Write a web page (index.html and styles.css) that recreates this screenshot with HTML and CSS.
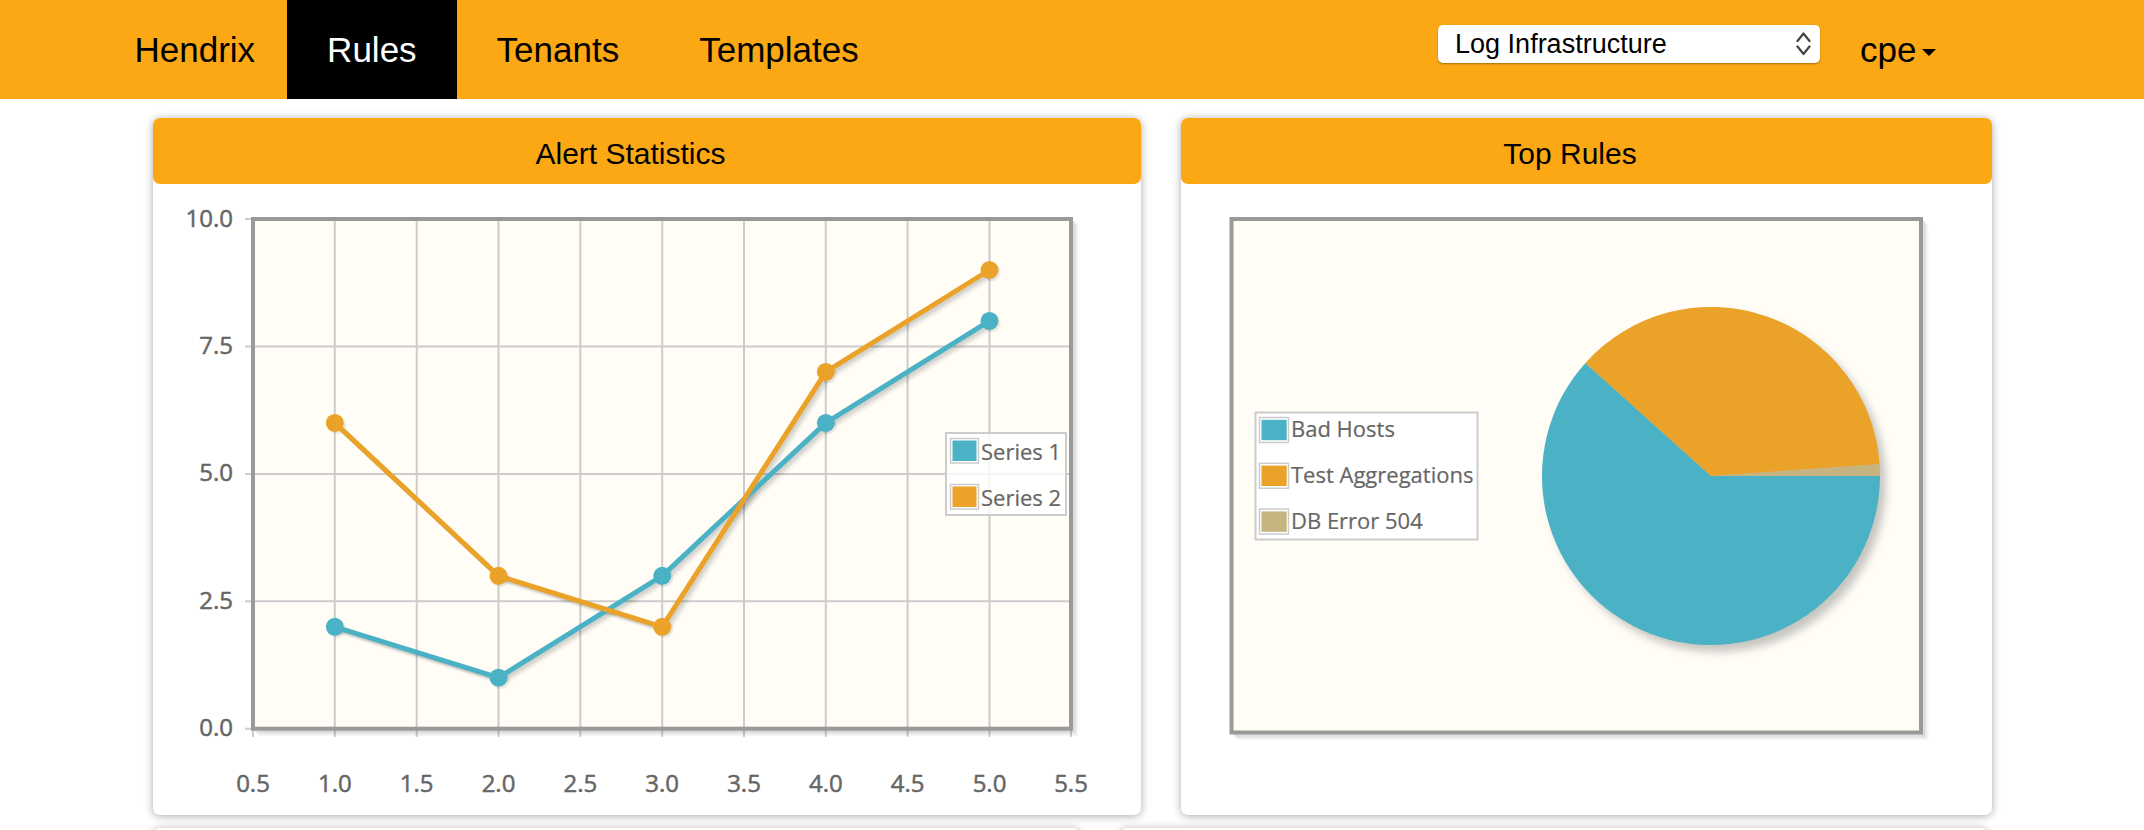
FILE: index.html
```html
<!DOCTYPE html>
<html lang="en">
<head>
<meta charset="utf-8">
<title>Hendrix - Rules</title>
<link rel="stylesheet" href="styles.css">
</head>
<body>
<nav class="navbar">
  <div class="nav-inner">
    <a class="brand" href="#">Hendrix</a>
    <ul class="nav-links">
      <li class="active"><a href="#">Rules</a></li>
      <li><a href="#">Tenants</a></li>
      <li><a href="#">Templates</a></li>
    </ul>
    <div class="spacer"></div>
    <div class="select">
      <span class="select-text">Log Infrastructure</span>
      <svg class="chevrons" width="16" height="24" viewBox="0 0 16 24">
        <polyline points="1.5,9 7.5,1.5 13.5,9" fill="none" stroke="#444" stroke-width="2.2" stroke-linecap="round" stroke-linejoin="round"/>
        <polyline points="1.5,14.5 7.5,22 13.5,14.5" fill="none" stroke="#444" stroke-width="2.2" stroke-linecap="round" stroke-linejoin="round"/>
      </svg>
    </div>
    <a class="user" href="#">cpe<span class="caret"></span></a>
  </div>
</nav>

<main class="container">
  <div class="row">
    <section class="card card-left">
      <div class="card-header">Alert Statistics</div>
      <div class="card-body">
        <svg class="chart" width="988" height="631" viewBox="153 184 988 631">
          <defs>
            <clipPath id="plotclip"><rect x="255" y="221" width="814" height="506"/></clipPath>
          </defs>
          <!-- plot background -->
          <rect x="253" y="219" width="818" height="509.7" fill="#fffdf6"/>
          <!-- grid -->
          <g stroke="#cccccc" stroke-width="2">
            <line x1="334.8" y1="219" x2="334.8" y2="737"/>
            <line x1="416.7" y1="219" x2="416.7" y2="737"/>
            <line x1="498.5" y1="219" x2="498.5" y2="737"/>
            <line x1="580.3" y1="219" x2="580.3" y2="737"/>
            <line x1="662.2" y1="219" x2="662.2" y2="737"/>
            <line x1="744.0" y1="219" x2="744.0" y2="737"/>
            <line x1="825.8" y1="219" x2="825.8" y2="737"/>
            <line x1="907.6" y1="219" x2="907.6" y2="737"/>
            <line x1="989.5" y1="219" x2="989.5" y2="737"/>
            <line x1="253" y1="737" x2="253" y2="728"/>
            <line x1="1071" y1="737" x2="1071" y2="728"/>
            <line x1="245" y1="346.4" x2="1071" y2="346.4"/>
            <line x1="245" y1="473.9" x2="1071" y2="473.9"/>
            <line x1="245" y1="601.3" x2="1071" y2="601.3"/>
            <line x1="245" y1="219" x2="253" y2="219"/>
            <line x1="245" y1="728.7" x2="253" y2="728.7"/>
          </g>
          <!-- border shadow -->
          <g fill="none" stroke="#000" stroke-width="4">
            <polyline points="255,730.5 1072.8,730.5 1072.8,221" stroke-opacity="0.08"/>
            <polyline points="256.8,732.3 1074.6,732.3 1074.6,222.8" stroke-opacity="0.06"/>
            <polyline points="258.6,734.1 1076.4,734.1 1076.4,224.6" stroke-opacity="0.04"/>
          </g>
          <!-- border -->
          <rect x="253" y="219" width="818" height="509.7" fill="none" stroke="#999999" stroke-width="4"/>

          <!-- series shadows -->
          <g clip-path="url(#plotclip)" fill="none" stroke="#000" stroke-width="5" stroke-linejoin="round">
            <g transform="translate(1.8,1.8)" stroke-opacity="0.1">
              <polyline points="334.8,626.8 498.5,677.7 662.2,575.8 825.8,422.9 989.5,320.9"/>
              <polyline points="334.8,422.9 498.5,575.8 662.2,626.8 825.8,371.9 989.5,270.0"/>
            </g>
            <g transform="translate(3.5,3.5)" stroke-opacity="0.07">
              <polyline points="334.8,626.8 498.5,677.7 662.2,575.8 825.8,422.9 989.5,320.9"/>
              <polyline points="334.8,422.9 498.5,575.8 662.2,626.8 825.8,371.9 989.5,270.0"/>
            </g>
            <g transform="translate(5.3,5.3)" stroke-opacity="0.04">
              <polyline points="334.8,626.8 498.5,677.7 662.2,575.8 825.8,422.9 989.5,320.9"/>
              <polyline points="334.8,422.9 498.5,575.8 662.2,626.8 825.8,371.9 989.5,270.0"/>
            </g>
          </g>
          <g fill="#000" fill-opacity="0.08">
            <circle cx="337" cy="629" r="9"/><circle cx="500.7" cy="679.9" r="9"/><circle cx="664.4" cy="578" r="9"/><circle cx="828" cy="425.1" r="9"/><circle cx="991.7" cy="323.1" r="9"/>
            <circle cx="337" cy="425.1" r="9"/><circle cx="500.7" cy="578" r="9"/><circle cx="664.4" cy="629" r="9"/><circle cx="828" cy="374.1" r="9"/><circle cx="991.7" cy="272.2" r="9"/>
          </g>
          <!-- series 1 -->
          <polyline points="334.8,626.8 498.5,677.7 662.2,575.8 825.8,422.9 989.5,320.9" fill="none" stroke="#4bb2c5" stroke-width="5" stroke-linejoin="round"/>
          <g fill="#4bb2c5">
            <circle cx="334.8" cy="626.8" r="9"/><circle cx="498.5" cy="677.7" r="9"/><circle cx="662.2" cy="575.8" r="9"/><circle cx="825.8" cy="422.9" r="9"/><circle cx="989.5" cy="320.9" r="9"/>
          </g>
          <!-- series 2 -->
          <polyline points="334.8,422.9 498.5,575.8 662.2,626.8 825.8,371.9 989.5,270.0" fill="none" stroke="#eaa228" stroke-width="5" stroke-linejoin="round"/>
          <g fill="#eaa228">
            <circle cx="334.8" cy="422.9" r="9"/><circle cx="498.5" cy="575.8" r="9"/><circle cx="662.2" cy="626.8" r="9"/><circle cx="825.8" cy="371.9" r="9"/><circle cx="989.5" cy="270.0" r="9"/>
          </g>

          <!-- axis labels -->
          <g class="axis-text" text-anchor="end">
            <text x="233" y="226.5">10.0</text>
            <text x="233" y="353.9">7.5</text>
            <text x="233" y="481.4">5.0</text>
            <text x="233" y="608.8">2.5</text>
            <text x="233" y="736.2">0.0</text>
          </g>
          <g class="axis-text" text-anchor="middle">
            <text x="253" y="792">0.5</text>
            <text x="334.8" y="792">1.0</text>
            <text x="416.7" y="792">1.5</text>
            <text x="498.5" y="792">2.0</text>
            <text x="580.3" y="792">2.5</text>
            <text x="662.2" y="792">3.0</text>
            <text x="744.0" y="792">3.5</text>
            <text x="825.8" y="792">4.0</text>
            <text x="907.6" y="792">4.5</text>
            <text x="989.5" y="792">5.0</text>
            <text x="1071" y="792">5.5</text>
          </g>

          <!-- legend -->
          <rect x="946" y="433" width="120" height="82" fill="#ffffff" fill-opacity="0.8" stroke="#cccccc" stroke-width="2"/>
          <rect x="950.5" y="438.5" width="28" height="24.5" fill="#fff" stroke="#cccccc" stroke-width="1.5"/>
          <rect x="952.5" y="440.5" width="24" height="20.5" fill="#4bb2c5"/>
          <rect x="950.5" y="484.5" width="28" height="24.5" fill="#fff" stroke="#cccccc" stroke-width="1.5"/>
          <rect x="952.5" y="486.5" width="24" height="20.5" fill="#eaa228"/>
          <g class="legend-text">
            <text x="981" y="459.5">Series 1</text>
            <text x="981" y="505.5">Series 2</text>
          </g>
        </svg>
      </div>
    </section>

    <section class="card card-right">
      <div class="card-header">Top Rules</div>
      <div class="card-body">
        <svg class="chart" width="811" height="631" viewBox="1181 184 811 631">
          <defs>
            <filter id="pieshadow" x="-20%" y="-20%" width="140%" height="140%">
              <feGaussianBlur stdDeviation="4"/>
            </filter>
          </defs>
          <rect x="1231.5" y="219" width="689.5" height="513.5" fill="#fffdf6"/>
          <g fill="none" stroke="#000" stroke-width="4">
            <polyline points="1233.3,734.3 1922.8,734.3 1922.8,220.8" stroke-opacity="0.08"/>
            <polyline points="1235.1,736.1 1924.6,736.1 1924.6,222.6" stroke-opacity="0.06"/>
            <polyline points="1236.9,737.9 1926.4,737.9 1926.4,224.4" stroke-opacity="0.04"/>
          </g>
          <rect x="1231.5" y="219" width="689.5" height="513.5" fill="none" stroke="#999999" stroke-width="4"/>

          <!-- pie -->
          <circle cx="1717" cy="483" r="169" fill="#000" fill-opacity="0.22" filter="url(#pieshadow)"/>
          <path d="M1711,476 L1880,476 A169,169 0 1 1 1585.4,362.9 Z" fill="#4bb2c5"/>
          <path d="M1711,476 L1585.4,362.9 A169,169 0 0 1 1879.6,464.2 Z" fill="#eaa228"/>
          <path d="M1711,476 L1879.6,464.2 A169,169 0 0 1 1880,476 Z" fill="#c5b47f"/>

          <!-- legend -->
          <rect x="1255.5" y="412.5" width="222" height="127" fill="#ffffff" stroke="#cccccc" stroke-width="2"/>
          <rect x="1259.5" y="417.5" width="29" height="25" fill="#fff" stroke="#cccccc" stroke-width="1.5"/>
          <rect x="1261.5" y="419.8" width="25.2" height="20.4" fill="#4bb2c5"/>
          <rect x="1259.5" y="463.3" width="29" height="25" fill="#fff" stroke="#cccccc" stroke-width="1.5"/>
          <rect x="1261.5" y="465.6" width="25.2" height="20.4" fill="#eaa228"/>
          <rect x="1259.5" y="509.1" width="29" height="25" fill="#fff" stroke="#cccccc" stroke-width="1.5"/>
          <rect x="1261.5" y="511.4" width="25.2" height="20.4" fill="#c5b47f"/>
          <g class="legend-text">
            <text x="1291" y="437.3">Bad Hosts</text>
            <text x="1291" y="483.1">Test Aggregations</text>
            <text x="1291" y="528.9">DB Error 504</text>
          </g>
        </svg>
      </div>
    </section>
  </div>

  <div class="row row-second">
    <section class="card card-wide"></section>
    <section class="card card-narrow"></section>
  </div>
</main>
</body>
</html>
```

FILE: styles.css
```css
html, body {
  margin: 0;
  padding: 0;
  background: #ffffff;
}

body {
  font-family: "Liberation Sans", Arial, Helvetica, sans-serif;
  color: #000;
}

/* ---------- navbar ---------- */
.navbar {
  background: #fca815;
  height: 99px;
}

.nav-inner {
  width: 1839px;
  margin: 0 auto;
  height: 99px;
  display: flex;
  align-items: center;
}

.brand {
  margin-left: -49px;
  padding: 0 32px 0 31px;
  font-size: 35px;
  line-height: 99px;
  color: #000;
  text-decoration: none;
}

.nav-links {
  display: flex;
  list-style: none;
  margin: 0;
  padding: 0;
  height: 99px;
}

.nav-links a {
  display: block;
  padding: 0 40px;
  font-size: 35px;
  line-height: 99px;
  color: #000;
  text-decoration: none;
}

.nav-links .active a {
  background: #000;
  color: #fff;
}

.spacer {
  flex: 1;
}

.select {
  align-self: flex-start;
  margin-top: 25px;
  width: 382px;
  height: 38px;
  box-sizing: border-box;
  padding-left: 17px;
  background: #fff;
  border-radius: 5px;
  box-shadow: 0 1px 2px rgba(0, 0, 0, 0.35);
  display: flex;
  align-items: center;
}

.select-text {
  font-size: 27px;
  line-height: 38px;
  color: #000;
}

.chevrons {
  margin-left: auto;
  margin-right: 8px;
  display: block;
}

.user {
  padding: 0 40px;
  margin-right: 16px;
  font-size: 35px;
  line-height: 99px;
  color: #000;
  text-decoration: none;
  white-space: nowrap;
}

.caret {
  display: inline-block;
  width: 0;
  height: 0;
  margin-left: 5px;
  vertical-align: middle;
  border-top: 7px solid #000;
  border-left: 7px solid transparent;
  border-right: 7px solid transparent;
}

/* ---------- content ---------- */
.container {
  width: 1839px;
  margin: 19px auto 0;
}

.row {
  display: flex;
  gap: 40px;
}

.card {
  background: #fff;
  border-radius: 7px;
  box-shadow: 0 1px 8px rgba(0, 0, 0, 0.35);
  height: 697px;
}

.card-left {
  width: 988px;
}

.card-right {
  width: 811px;
}

.card-header {
  background: #fca815;
  border-radius: 7px;
  height: 66px;
  box-sizing: border-box;
  padding: 6px 32px 0 0;
  text-align: center;
  font-size: 30px;
  line-height: 60px;
  color: #000;
}

.card-body .chart {
  display: block;
}

.axis-text text {
  font-family: "Open Sans", "DejaVu Sans", sans-serif;
  font-size: 24px;
  fill: #666666;
  stroke: #666666;
  stroke-width: 0.5px;
}

.legend-text text {
  font-family: "Open Sans", "DejaVu Sans", sans-serif;
  font-size: 22px;
  fill: #666666;
  stroke: #666666;
  stroke-width: 0.2px;
}

.row-second {
  margin-top: 13px;
}

.card-wide {
  width: 927px;
}

.card-narrow {
  width: 868px;
}
```
